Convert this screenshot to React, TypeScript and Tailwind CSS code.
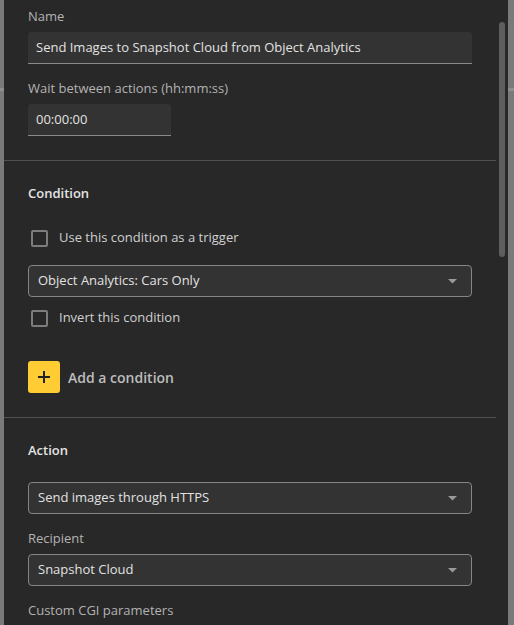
import React from "react";

const font = { fontFamily: '"Open Sans", "Noto Sans", sans-serif' };

function Label({ children, className = "" }: { children: React.ReactNode; className?: string }) {
  return <div className={`text-[13px] leading-[18px] text-[#b3b3b3] ${className}`}>{children}</div>;
}

function TextField({ value, className = "" }: { value: string; className?: string }) {
  return (
    <div
      className={`flex h-[32px] items-center rounded-t-[3px] border-b border-[#8a8a8a] bg-[#333333] px-2 text-[13px] text-[#e2e2e2] ${className}`}
    >
      {value}
    </div>
  );
}

function Select({ value, className = "" }: { value: string; className?: string }) {
  return (
    <div
      className={`flex h-[32px] items-center justify-between rounded-[4px] border border-[#858585] bg-[#333333] pl-[9px] pr-[14px] text-[13px] text-[#e2e2e2] ${className}`}
    >
      <span>{value}</span>
      <svg width="9" height="5" viewBox="0 0 9 5">
        <path d="M0 0 L9 0 L4.5 4.5 Z" fill="#9a9a9a" />
      </svg>
    </div>
  );
}

function Checkbox({ label, className = "" }: { label: string; className?: string }) {
  return (
    <div className={`flex h-[24px] items-center ${className}`}>
      <div className="ml-[3px] h-[17px] w-[17px] rounded-[2px] border-2 border-[#7c7c7c]" />
      <span className="ml-[11px] text-[13px] text-[#d0d0d0]">{label}</span>
    </div>
  );
}

function Heading({ children, className = "" }: { children: React.ReactNode; className?: string }) {
  return <div className={`text-[13px] font-semibold leading-[20px] text-[#e4e4e4] ${className}`}>{children}</div>;
}

export default function App() {
  return (
    <div className="flex h-[625px] w-[514px] overflow-hidden bg-[#7a7a7a]" style={font}>
      <div className="flex w-[4px] flex-col">
        <div className="h-[88px]" />
        <div className="h-[3px] bg-[#8e8e8e]" />
      </div>

      <div className="flex flex-1 bg-[#282828]">
        <div className="w-[492px]">
          <div className="px-[24px] pt-[7px]">
            <Label>Name</Label>
            <TextField className="mt-[7px]" value="Send Images to Snapshot Cloud from Object Analytics" />
            <Label className="mt-[15px]">Wait between actions (hh:mm:ss)</Label>
            <TextField className="mt-[7px] w-[143px]" value="00:00:00" />
          </div>

          <div className="mt-[24px] h-px bg-[#505050]" />

          <div className="px-[24px] pt-[22px]">
            <Heading>Condition</Heading>
            <Checkbox className="mt-[23px]" label="Use this condition as a trigger" />
            <Select className="mt-[15px]" value="Object Analytics: Cars Only" />
            <Checkbox className="mt-[9px]" label="Invert this condition" />
            <div className="mt-[31px] flex items-center">
              <div className="flex h-[32px] w-[32px] items-center justify-center rounded-[3px] bg-[#ffcc33]">
                <svg width="14" height="14" viewBox="0 0 14 14">
                  <path d="M7 1 V13 M1 7 H13" stroke="#222" strokeWidth="2" />
                </svg>
              </div>
              <span className="ml-[8px] text-[14px] font-semibold text-[#bdbdbd]">Add a condition</span>
            </div>
          </div>

          <div className="mt-[24px] h-px bg-[#505050]" />

          <div className="px-[24px] pt-[22px]">
            <Heading>Action</Heading>
            <Select className="mt-[22px]" value="Send images through HTTPS" />
            <Label className="mt-[15px]">Recipient</Label>
            <Select className="mt-[7px]" value="Snapshot Cloud" />
            <Label className="mt-[15px]">Custom CGI parameters</Label>
          </div>
        </div>

        <div className="flex flex-1 justify-center pt-[22px]">
          <div className="h-[235px] w-[6px] rounded-full bg-[#5e5e5e]" />
        </div>
      </div>

      <div className="flex w-[6px] flex-col">
        <div className="h-[88px]" />
        <div className="h-[3px] bg-[#8e8e8e]" />
      </div>
    </div>
  );
}
